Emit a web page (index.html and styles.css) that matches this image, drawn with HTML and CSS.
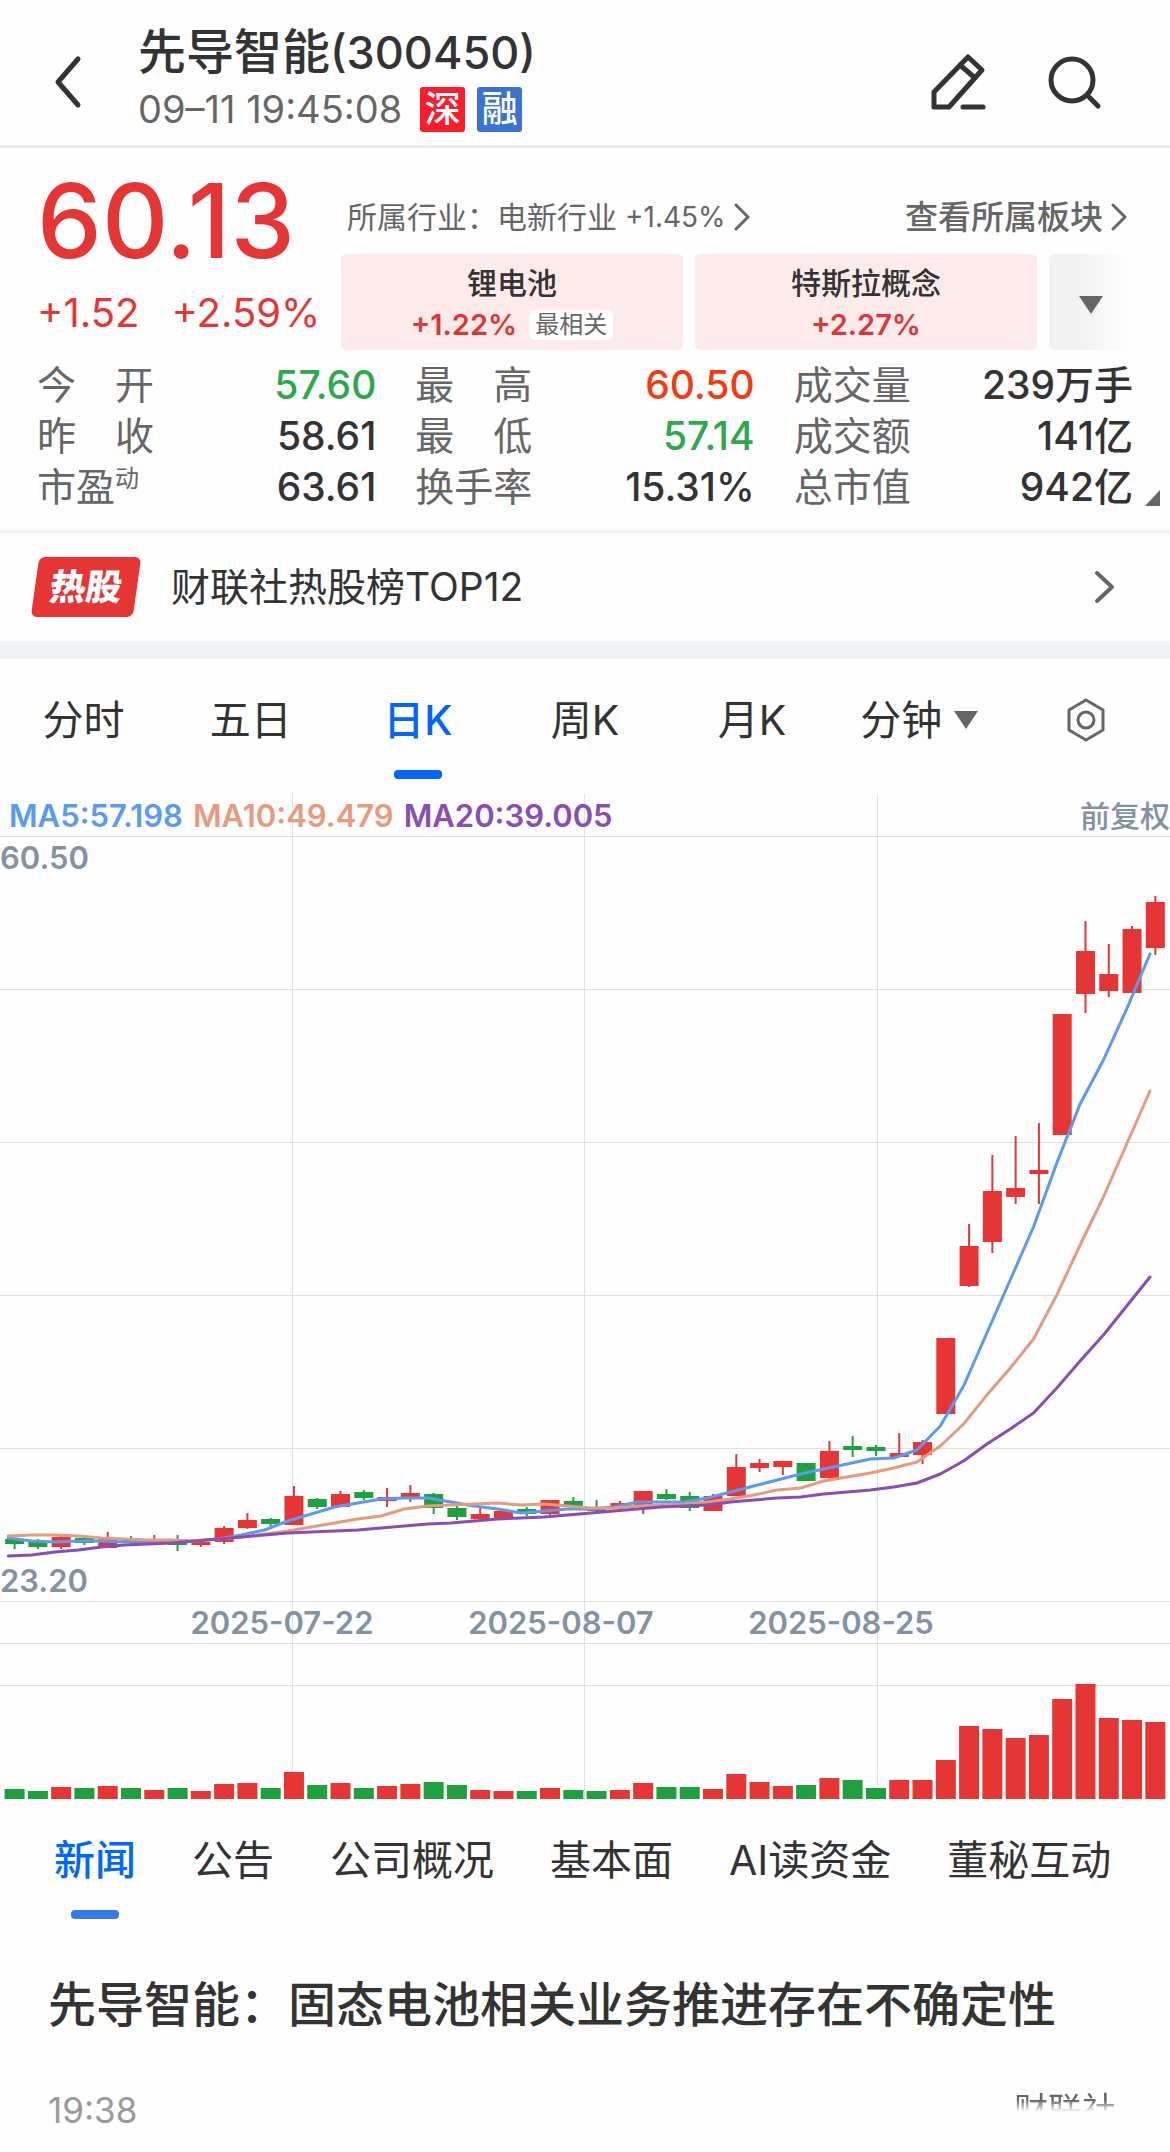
FILE: index.html
```html
<!DOCTYPE html>
<html lang="zh-CN">
  <head>
    <meta charset="UTF-8" />
    <meta name="viewport" content="width=device-width, initial-scale=1" />
    <title>先导智能(300450)</title>
    <link rel="stylesheet" href="styles.css">
  </head>
  <body>
    <header class="topbar">
      <button class="icon-btn back" aria-label="返回">
        <svg width="28" height="54" viewBox="0 0 28 54"><path d="M24 4 4 27l20 23" /></svg>
      </button>
      <div class="stock">
        <h1>先导智能<span>(300450)</span></h1>
        <div class="stock-sub">
          <time>09–11 19:45:08</time>
          <span class="mark mark-sz">深</span>
          <span class="mark mark-rong">融</span>
        </div>
      </div>
      <button class="icon-btn" aria-label="编辑">
        <svg width="58" height="58" viewBox="0 0 58 58"><path d="M4 54V39L38 4l14 13-33 37H4zM30 12l15 13M33 54h20" /></svg>
      </button>
      <button class="icon-btn" aria-label="搜索">
        <svg width="58" height="58" viewBox="0 0 58 58"><circle cx="26" cy="27" r="21" /><path d="m41 42 11 11" /></svg>
      </button>
    </header>

    <section class="quote">
      <div class="quote-top">
        <div class="price-box">
          <div class="price">60.13</div>
          <div class="change"><span>+1.52</span><span>+2.59%</span></div>
        </div>
        <div class="plates">
          <div class="plates-head">
            <a href="#">所属行业：电新行业 <span class="num">+1.45%</span><svg width="16" height="28" viewBox="0 0 16 28"><path d="m2 2 12 12L2 26" /></svg></a>
            <a href="#" class="more">查看所属板块<svg width="16" height="28" viewBox="0 0 16 28"><path d="m2 2 12 12L2 26" /></svg></a>
          </div>
          <div class="chips">
            <a href="#" class="chip">
              <b>锂电池</b>
              <span class="chip-rate">+1.22%<em>最相关</em></span>
            </a>
            <a href="#" class="chip">
              <b>特斯拉概念</b>
              <span class="chip-rate">+2.27%</span>
            </a>
            <button class="chips-more" aria-label="展开"><i class="caret"></i></button>
          </div>
        </div>
      </div>
      <dl class="stats">
        <div><dt>今　开</dt><dd class="down">57.60</dd></div>
        <div><dt>最　高</dt><dd class="up">60.50</dd></div>
        <div><dt>成交量</dt><dd>239万手</dd></div>
        <div><dt>昨　收</dt><dd>58.61</dd></div>
        <div><dt>最　低</dt><dd class="down">57.14</dd></div>
        <div><dt>成交额</dt><dd>141亿</dd></div>
        <div><dt>市盈<sup>动</sup></dt><dd>63.61</dd></div>
        <div><dt>换手率</dt><dd>15.31%</dd></div>
        <div><dt>总市值</dt><dd>942亿</dd></div>
      </dl>
      <i class="corner"></i>
    </section>

    <a href="#" class="hot">
      <span class="hot-tag"><span>热股</span></span>
      <span class="hot-text">财联社热股榜TOP12</span>
      <svg width="22" height="34" viewBox="0 0 22 34"><path d="m3 3 15 14L3 31" /></svg>
    </a>

    <nav class="k-tabs">
      <button>分时</button>
      <button>五日</button>
      <button class="active">日K</button>
      <button>周K</button>
      <button>月K</button>
      <button>分钟<i class="caret"></i></button>
      <button aria-label="设置">
        <svg width="42" height="44" viewBox="0 0 42 44"><path d="M21 2 38 12v20L21 42 4 32V12z" /><circle cx="21" cy="22" r="8" /></svg>
      </button>
    </nav>

    <section class="chart">
      <div class="legend">
        <span class="ma5">MA5:57.198</span>
        <span class="ma10">MA10:49.479</span>
        <span class="ma20">MA20:39.005</span>
        <span class="adjust">前复权</span>
      </div>
      <svg id="kline" viewBox="0 0 1170 1006"></svg>
    </section>

    <nav class="news-tabs">
      <a href="#" class="active">新闻</a>
      <a href="#">公告</a>
      <a href="#">公司概况</a>
      <a href="#">基本面</a>
      <a href="#">AI读资金</a>
      <a href="#">董秘互动</a>
    </nav>

    <article class="news">
      <h2>先导智能：固态电池相关业务推进存在不确定性</h2>
      <div class="news-meta">
        <time>19:38</time>
        <span class="source">财联社</span>
      </div>
    </article>

    <script src="chart.js"></script>
  </body>
</html>
```
FILE: styles.css
```css
:root {
  --text: #333;
  --text-sub: #666;
  --text-axis: #8292a2;
  --red: #e63535;
  --green: #1fa03f;
  --blue: #0066ff;
  --line: #e0e0e0;
}

* {
  box-sizing: border-box;
}

body {
  margin: 0;
  background: #fefefe;
  color: var(--text);
  font-family: Inter, "Noto Sans CJK SC", sans-serif;
}

h1,
h2,
dl,
dd {
  margin: 0;
}

a {
  color: inherit;
  text-decoration: none;
}

button {
  padding: 0;
  border: none;
  background: none;
  color: inherit;
  font: inherit;
  cursor: pointer;
}

svg {
  display: block;
  fill: none;
  stroke: currentColor;
  stroke-width: 4;
  stroke-linecap: round;
  stroke-linejoin: round;
}

.caret {
  border: 12px solid transparent;
  border-top: 18px solid var(--text-sub);
  border-bottom: 0;
}

/* 顶部栏 */
.topbar {
  display: flex;
  align-items: center;
  padding: 24px 66px 13px 54px;
  border-bottom: 3px solid #ebebeb;
}

.stock {
  flex: 1;
  margin-left: 56px;
}

.stock h1 {
  font-size: 48px;
  font-weight: 500;
  line-height: 56px;
}

.stock h1 span {
  font-size: 45px;
  line-height: 1;
}

.stock-sub {
  display: flex;
  align-items: center;
  gap: 12px;
  margin-top: 7px;
  color: var(--text-sub);
  font-size: 38px;
  line-height: 45px;
}

.stock-sub time {
  margin-right: 6px;
}

.mark {
  width: 45px;
  border-radius: 3px;
  color: #fff;
  font-size: 36px;
  font-weight: 500;
  text-align: center;
}

.mark-sz {
  background: #fb1c2c;
}

.mark-rong {
  background: #3b73d3;
}

.icon-btn {
  padding-top: 7px;
}

.icon-btn svg {
  stroke-width: 5;
}

.icon-btn + .icon-btn {
  margin-left: 58px;
}

/* 行情 */
.quote {
  position: relative;
  padding: 23px 37px 18px;
  border-bottom: 3px solid #f0f0f0;
}

.quote-top {
  display: flex;
}

.price-box {
  width: 304px;
  color: var(--red);
}

.price {
  font-size: 103px;
  font-weight: 500;
  line-height: 100px;
}

.change {
  display: flex;
  gap: 32px;
  margin-top: 17px;
  font-size: 40px;
  line-height: 50px;
}

.plates {
  flex: 1;
  padding-top: 26px;
}

.plates-head {
  display: flex;
  justify-content: space-between;
  padding: 0 6px;
  color: var(--text-sub);
  font-size: 30px;
  line-height: 40px;
}

.plates-head a {
  display: flex;
  align-items: center;
  gap: 8px;
}

.plates-head .num {
  font-size: 28px;
}

.plates-head svg {
  stroke-width: 3;
}

.plates-head .more {
  font-size: 33px;
  font-weight: 500;
}

.chips {
  display: flex;
  gap: 12px;
  margin-top: 17px;
}

.chip {
  flex: 1;
  display: flex;
  flex-direction: column;
  align-items: center;
  gap: 2px;
  height: 96px;
  padding-top: 9px;
  border-radius: 5px;
  background: #fdeaea;
  font-size: 30px;
  line-height: 40px;
}

.chip b {
  font-weight: 500;
}

.chip-rate {
  display: flex;
  align-items: center;
  gap: 12px;
  color: #dc3636;
  font-size: 29px;
  font-weight: 600;
}

.chip em {
  padding: 0 6px;
  border-radius: 6px;
  background: #fff;
  color: var(--text-sub);
  font-size: 24px;
  font-style: normal;
  font-weight: 400;
  line-height: 30px;
}

.chips-more {
  display: grid;
  place-items: center;
  width: 84px;
  padding-top: 6px;
  border-radius: 5px;
  background: linear-gradient(90deg, #f2f2f2 40%, #fefefe);
}

.stats {
  display: grid;
  grid-template-columns: repeat(3, 1fr);
  column-gap: 39px;
  margin-top: 9px;
  font-size: 39px;
  line-height: 51px;
}

.stats div {
  display: flex;
  justify-content: space-between;
  height: 51px;
}

.stats dt {
  color: var(--text-sub);
}

.stats sup {
  font-size: 24px;
  line-height: 1;
}

.stats dd {
  font-weight: 500;
}

.stats .up {
  color: #f63a0f;
}

.stats .down {
  color: #2fa84c;
}

.corner {
  position: absolute;
  right: 10px;
  bottom: 24px;
  border-left: 15px solid transparent;
  border-bottom: 16px solid var(--text-sub);
}

/* 热股榜 */
.hot {
  display: flex;
  align-items: center;
  height: 126px;
  padding: 0 54px 0 35px;
  border-bottom: 18px solid #f0f2f6;
}

.hot-tag {
  width: 102px;
  border-radius: 6px;
  background: var(--red);
  color: #fff;
  font-size: 36px;
  font-weight: 900;
  line-height: 60px;
  text-align: center;
  transform: skewX(-8deg);
}

.hot-text {
  flex: 1;
  margin-left: 34px;
  font-size: 39px;
  line-height: 60px;
}

.hot svg {
  color: var(--text-sub);
}

/* K线周期 */
.k-tabs {
  display: grid;
  grid-template-columns: repeat(7, 1fr);
  height: 135px;
  padding-top: 31px;
  font-size: 41px;
  line-height: 60px;
}

.k-tabs button {
  display: flex;
  justify-content: center;
  align-items: center;
  gap: 12px;
  height: 60px;
}

.k-tabs svg {
  color: var(--text-sub);
  stroke-width: 3;
}

.k-tabs .active {
  flex-direction: column;
  justify-content: flex-start;
  gap: 20px;
  height: 89px;
  color: var(--blue);
  font-weight: 500;
}

.k-tabs .active::after,
.news-tabs .active::after {
  content: "";
  width: 48px;
  height: 9px;
  border-radius: 4px;
  background: var(--blue);
}

/* 图表 */
.chart {
  position: relative;
}

.chart #kline {
  width: 100%;
  height: auto;
}

.legend {
  position: absolute;
  top: 2px;
  left: 9px;
  right: 0;
  display: flex;
  gap: 10px;
  font-size: 31px;
  font-weight: 600;
  line-height: 40px;
}

.adjust {
  margin-left: auto;
  color: var(--text-axis);
  font-size: 30px;
  font-weight: 500;
}

.ma5 {
  color: #5a9bf0;
  stroke: #5a9bf0;
}

.ma10 {
  color: #e69a7e;
  stroke: #e69a7e;
}

.ma20 {
  color: #8a4db5;
  stroke: #8a4db5;
}

#kline polyline {
  stroke-width: 3;
}

.grid line {
  stroke: var(--line);
  stroke-width: 1;
}

.axis text {
  fill: var(--text-axis);
  stroke: none;
  font-size: 31px;
  font-weight: 600;
}

.rise {
  fill: var(--red);
  stroke: none;
}

.fall {
  fill: var(--green);
  stroke: none;
}

/* 资讯 */
.news-tabs {
  display: flex;
  gap: 56px;
  height: 130px;
  padding: 30px 54px 0;
  font-size: 41px;
  line-height: 60px;
  white-space: nowrap;
}

.news-tabs .active {
  display: flex;
  flex-direction: column;
  align-items: center;
  gap: 20px;
  color: var(--blue);
  font-weight: 500;
}

.news-tabs .active::after {
  background: #3478ea;
}

.news {
  padding: 45px 48px 17px;
}

.news h2 {
  font-size: 48px;
  font-weight: 500;
  line-height: 60px;
}

.news-meta {
  display: flex;
  justify-content: space-between;
  align-items: center;
  margin-top: 50px;
  padding-right: 6px;
  color: #999;
  font-size: 35px;
  line-height: 50px;
}

.source {
  color: var(--text-sub);
  font-size: 34px;
  line-height: 44px;
  -webkit-mask-image: linear-gradient(#000 28%, transparent 54%);
  mask-image: linear-gradient(#000 28%, transparent 54%);
}
```
FILE: chart.js
```js
// 每根K线: [涨跌, 最高, 实体上沿, 实体下沿, 最低, 成交量]
const candles = [
  ["g", 745, 745, 750, 755, 10], ["g", 745, 748, 753, 755, 8], ["r", 742, 743, 753, 755, 12],
  ["g", 743, 744, 749, 751, 11], ["r", 738, 745, 754, 754, 13], ["g", 742, 745, 749, 750, 11],
  ["r", 741, 746, 749, 749, 9], ["g", 741, 748, 751, 757, 11], ["r", 747, 748, 751, 753, 8],
  ["r", 732, 734, 748, 750, 15], ["r", 719, 726, 734, 735, 16], ["g", 724, 725, 730, 733, 11],
  ["r", 692, 702, 731, 731, 27], ["g", 704, 705, 713, 715, 14], ["r", 697, 700, 713, 713, 16],
  ["g", 696, 698, 704, 706, 11], ["r", 694, 703, 707, 713, 13], ["r", 691, 699, 703, 708, 15],
  ["g", 699, 700, 714, 720, 17], ["g", 708, 714, 723, 726, 14], ["r", 713, 720, 725, 725, 9],
  ["r", 716, 717, 725, 726, 8], ["g", 713, 715, 720, 722, 8], ["r", 706, 706, 720, 723, 11],
  ["g", 703, 707, 713, 713, 9], ["g", 706, 713, 717, 717, 8], ["r", 707, 709, 712, 713, 9],
  ["r", 697, 697, 711, 720, 16], ["g", 695, 700, 705, 706, 12], ["g", 698, 702, 714, 717, 12],
  ["r", 700, 702, 717, 717, 10], ["r", 660, 673, 702, 702, 25], ["r", 665, 669, 674, 678, 17],
  ["r", 667, 667, 673, 681, 13], ["g", 669, 669, 687, 687, 14], ["r", 647, 657, 684, 685, 21],
  ["g", 642, 652, 656, 663, 19], ["g", 651, 653, 657, 662, 11], ["r", 639, 659, 663, 663, 19],
  ["r", 646, 648, 661, 670, 19], ["r", 544, 544, 620, 620, 39], ["r", 430, 452, 492, 493, 73],
  ["r", 361, 397, 448, 459, 70], ["r", 342, 394, 403, 410, 61], ["r", 329, 376, 380, 410, 64],
  ["r", 220, 220, 341, 341, 100], ["r", 127, 157, 200, 219, 115], ["r", 150, 180, 197, 203, 81],
  ["r", 132, 135, 199, 199, 79], ["r", 102, 108, 154, 161, 77],
];

const averages = {
  ma5: [744, 747, 748, 747, 747, 748, 748, 748, 747, 745, 741, 736, 727, 720, 713, 709, 705, 704, 704, 708, 712, 715, 719, 717, 715, 715, 713, 708, 708, 708, 704, 698, 692, 686, 680, 675, 670, 665, 664, 656, 632, 592, 539, 486, 433, 369, 310, 266, 215, 160],
  ma10: [742, 741, 741, 742, 744, 745, 746, 746, 747, 745, 743, 740, 737, 733, 729, 725, 722, 715, 712, 711, 710, 709, 711, 710, 712, 714, 714, 712, 711, 710, 708, 705, 701, 696, 694, 687, 683, 679, 674, 668, 652, 630, 601, 574, 545, 501, 451, 403, 350, 297],
  ma20: [762, 761, 758, 756, 753, 751, 750, 749, 747, 745, 743, 741, 739, 738, 737, 736, 734, 732, 730, 729, 727, 725, 724, 723, 721, 719, 717, 715, 713, 712, 711, 708, 706, 704, 703, 700, 698, 696, 693, 689, 680, 667, 650, 635, 619, 594, 567, 541, 512, 483],
};

const WIDTH = 1170;
const BASE = 1005;
const STEP = 23.28;

let html = '<g class="grid">';
[42, 195, 348, 501, 654, 807, 849, 891].forEach((y) => {
  html += `<line x1="0" x2="${WIDTH}" y1="${y + 0.5}" y2="${y + 0.5}" />`;
});
[292.5, 584.5, 877.5].forEach((x) => {
  html += `<line x1="${x}" x2="${x}" y1="0" y2="${BASE}" />`;
});
html += "</g>";

candles.forEach(([dir, high, top, bottom, low, vol], i) => {
  const x = 14.6 + i * STEP;
  html += `<g class="${dir === "r" ? "rise" : "fall"}">`;
  html += `<rect x="${x - 1}" y="${high}" width="2" height="${low - high}" />`;
  html += `<rect x="${x - 9.5}" y="${top}" width="19" height="${bottom - top}" />`;
  html += `<rect x="${x - 10}" y="${BASE - vol}" width="20" height="${vol}" />`;
  html += "</g>";
});

Object.entries(averages).forEach(([name, values]) => {
  const points = values.map((y, i) => `${(8.3 + i * 23.3).toFixed(1)},${y}`).join(" ");
  html += `<polyline class="${name}" points="${points}" />`;
});

html += '<g class="axis">';
html += '<text x="0" y="75">60.50</text><text x="0" y="798">23.20</text>';
html += '<text x="282" y="840" text-anchor="middle">2025-07-22</text>';
html += '<text x="561" y="840" text-anchor="middle">2025-08-07</text>';
html += '<text x="841" y="840" text-anchor="middle">2025-08-25</text>';
html += "</g>";

document.getElementById("kline").innerHTML = html;
```
